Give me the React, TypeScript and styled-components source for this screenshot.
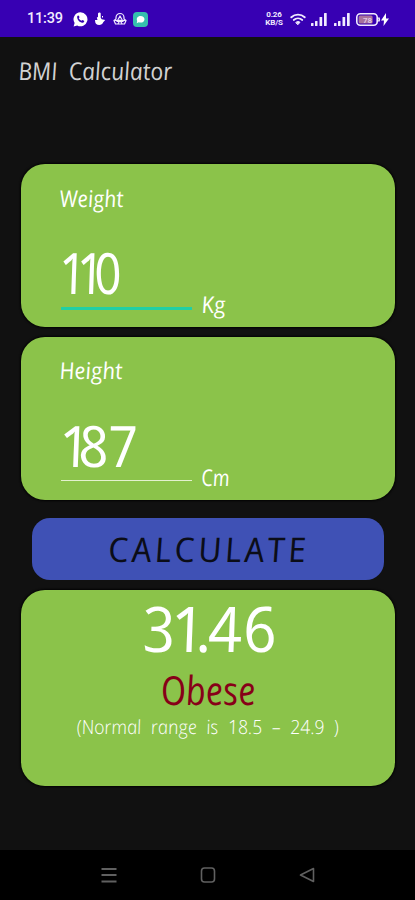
import React from "react";
import styled, { createGlobalStyle } from "styled-components";

const GlobalStyle = createGlobalStyle`
  * { box-sizing: border-box; }
  body { margin: 0; background: #111; }
`;

const Screen = styled.div`
  width: 415px;
  height: 900px;
  display: flex;
  flex-direction: column;
  background: #111111;
  overflow: hidden;
  font-family: "Open Sans", "Noto Sans", sans-serif;
`;

const StatusBar = styled.header`
  height: 37px;
  flex: none;
  display: flex;
  align-items: center;
  justify-content: space-between;
  padding: 1px 25px 0 27px;
  background: #3700b3;
  color: #f1ebff;
`;

const StatusGroup = styled.div<{ $gap: number }>`
  display: flex;
  align-items: center;
  gap: ${(p) => p.$gap}px;
`;

const Clock = styled.span`
  width: 36px;
  margin-right: 3px;
  font: 500 14.5px/18px Roboto, sans-serif;
  letter-spacing: -0.2px;
`;

const NetSpeed = styled.div`
  display: flex;
  flex-direction: column;
  width: 20px;
  text-align: center;
  font: 700 8px/8px Roboto, sans-serif;
  letter-spacing: -0.1px;
`;

const NetLine = styled.span`
  display: block;
  height: 8px;
  overflow: hidden;
`;

const Ink = styled.span<{
  $size: number;
  $line: number;
  $stretch?: number;
  $skew?: number;
  $weight?: number;
  $track?: number;
  $words?: number;
  $color?: string;
  $center?: boolean;
}>`
  display: block;
  white-space: pre;
  font-style: italic;
  font-weight: ${(p) => p.$weight ?? 400};
  font-size: ${(p) => p.$size}px;
  line-height: ${(p) => p.$line}px;
  letter-spacing: ${(p) => p.$track ?? 0}px;
  word-spacing: ${(p) => p.$words ?? 0}px;
  color: ${(p) => p.$color ?? "#fff"};
  transform: scaleX(${(p) => p.$stretch ?? 1}) skewX(${(p) => p.$skew ?? 8}deg);
  transform-origin: ${(p) => (p.$center ? "center" : "left center")};
`;

const Glyph = styled.span<{ $kern: number }>`
  letter-spacing: ${(p) => p.$kern}px;
`;

const TitleBar = styled.div`
  height: 127px;
  flex: none;
  padding: 18px 0 0 18px;
`;

const Content = styled.main`
  flex: 1;
  display: flex;
  flex-direction: column;
  padding: 0 20.5px 0 21px;
`;

const Card = styled.section<{ $h: number }>`
  height: ${(p) => p.$h}px;
  flex: none;
  border-radius: 24px;
  background: #8bc34a;
  box-shadow: 0 0 2px 1px #030303;
`;

const MeasureCard = styled(Card)`
  padding: 17.5px 0 0 38px;
  margin-bottom: 9.5px;
`;

const EntryRow = styled.div`
  display: flex;
  height: 90px;
  margin-top: 18.5px;
`;

const Field = styled.div<{ $active?: boolean }>`
  width: 131px;
  height: ${(p) => (p.$active ? 77.5 : 76.5)}px;
  margin: 0 8px 0 2px;
  padding-top: 5px;
  border-bottom: ${(p) => (p.$active ? "3px solid #20cfa5" : "1.5px solid #e3f1ce")};
`;

const FieldValue = styled.div`
  margin-left: -3px;
`;

const Unit = styled.div`
  padding: 56px 0 0 1px;
`;

const CalculateButton = styled.button`
  width: 352px;
  height: 62px;
  margin: 9px 0 9.5px 11px;
  padding: 0;
  border: 0;
  border-radius: 18px;
  background: #3f51b5;
  font-family: inherit;
  flex: none;
`;

const ResultCard = styled(Card)`
  padding-top: 3px;
  display: flex;
  flex-direction: column;
  align-items: center;
`;

const NavBar = styled.nav`
  height: 50px;
  flex: none;
  display: flex;
  align-items: center;
  justify-content: center;
  gap: 81px;
  background: #000;
`;

const Signal = () => (
  <svg width="17" height="13" viewBox="0 0 17 13" fill="currentColor">
    <rect x="0" y="10" width="2.5" height="3" rx=".5" />
    <rect x="4" y="8" width="2.5" height="5" rx=".5" />
    <rect x="8.5" y="4" width="2.7" height="9" rx=".5" />
    <rect x="13" y="0" width="2.7" height="13" rx=".5" />
  </svg>
);

const CallIcon = () => (
  <svg width="15" height="15" viewBox="0 0 15 15">
    <path d="M7.5 .3a7 7 0 1 1-3.3 13.2L.6 14.5l1-3.5A7 7 0 0 1 7.5.3Z" fill="#fff" />
    <path d="M4.3 4.1c.6-1 1.4-.8 1.7 0l.5 1.2-.7.9c.6 1.2 1.4 2 2.7 2.6l.9-.9 1.6.8c.7.5-.2 2-1.400 2.100C6.800 11 3.400 7.300 4.300 4.100Z" fill="#3700b3" />
  </svg>
);

const TapIcon = () => (
  <svg width="12" height="14" viewBox="0 0 12 14" fill="#fff">
    <path d="M4 1.500c.5-1.300 2.500-1.300 2.700 0v4.300l1 1.500 3.500.7-2 2.300c-.7 1.700-2 2.700-4 2.700-2.500 0-4-1.500-4-3.300L1 8h2.500l-.7-2.500L4 5Z" />
    <path d="M8.500 4v1.500" stroke="#fff" strokeWidth="1" />
  </svg>
);

const DriveIcon = () => (
  <svg width="14" height="14" viewBox="0 0 14 14" fill="none" stroke="currentColor" strokeWidth="1.200" strokeLinejoin="round">
    <path d="M3 7V5.500a4 4 0 0 1 8 0V7l2 1.500-1.500 3.500h-9L1 8.500Z" />
    <path d="M4 9.500 7 4l3 5.500ZM1.500 8.500h11M5 12l2-4 2 4" />
  </svg>
);

const ChatIcon = () => (
  <svg width="15" height="15" viewBox="0 0 15 15">
    <rect width="15" height="15" rx="4" fill="#35bfae" />
    <path d="M7.500 4c2.500 0 4 1.300 4 3.200s-1.600 3.400-4 3.400c-.7 0-1.300-.1-1.800-.4l-2 1.100.5-2.200C3 6.400 4.600 4 7.500 4Z" fill="#fff" />
  </svg>
);

const WifiIcon = () => (
  <svg width="16" height="13" viewBox="0 0 16 13" fill="none" stroke="currentColor" strokeLinecap="round">
    <path d="M1.300 4.300C5 .7 11 .7 14.700 4.300" strokeWidth="1.900" />
    <path d="M3.700 7c2.500-2.300 6.100-2.300 8.600 0" strokeWidth="1.700" />
    <path d="M6 9.300c1.200-1 2.800-1 4 0L8 11.500Z" fill="currentColor" strokeWidth="1" />
  </svg>
);

const BatteryIcon = () => (
  <svg width="34" height="13" viewBox="0 0 34 13">
    <rect x=".8" y=".8" width="20.400" height="11.400" rx="3.500" fill="none" stroke="currentColor" strokeWidth="1.600" />
    <rect x="2.600" y="2.600" width="14" height="7.800" rx="1.500" fill="#a8719c" />
    <path d="M22.500 4.500q1.700 2 0 4" stroke="currentColor" fill="none" strokeWidth="1.500" />
    <text x="11.500" y="9.500" textAnchor="middle" fontFamily="Roboto" fontSize="8" fontWeight="700" fill="#dfc6e4">78</text>
    <path d="M30 0 25 7.500h3L27.500 13 33 5.500h-3Z" fill="#fff" />
  </svg>
);

interface MeasureProps {
  label: string;
  value: React.ReactNode;
  unit: string;
  active?: boolean;
  labelStretch: number;
  valueStretch: number;
  unitStretch: number;
}

const Measure = (p: MeasureProps) => (
  <MeasureCard $h={163}>
    <Ink $size={23} $line={32} $weight={500} $stretch={p.labelStretch}>{p.label}</Ink>
    <EntryRow>
      <Field $active={p.active}>
        <FieldValue>
          <Ink $size={57} $line={70} $weight={500} $stretch={p.valueStretch} $skew={10}>{p.value}</Ink>
        </FieldValue>
      </Field>
      <Unit>
        <Ink $size={23} $line={32} $weight={500} $stretch={p.unitStretch}>{p.unit}</Ink>
      </Unit>
    </EntryRow>
  </MeasureCard>
);

export default function App() {
  return (
    <Screen>
      <GlobalStyle />
      <StatusBar>
        <StatusGroup $gap={6.5}>
          <Clock>11:39</Clock>
          <CallIcon />
          <TapIcon />
          <DriveIcon />
          <ChatIcon />
        </StatusGroup>
        <StatusGroup $gap={5.5}>
          <NetSpeed><NetLine>0.26</NetLine><NetLine>KB/S</NetLine></NetSpeed>
          <WifiIcon />
          <Signal />
          <Signal />
          <BatteryIcon />
        </StatusGroup>
      </StatusBar>
      <TitleBar>
        <Ink $size={24.5} $line={32} $color="#d2d2d2" $stretch={0.93} $words={6}>BMI Calculator</Ink>
      </TitleBar>
      <Content>
        <Measure label="Weight" value={<><Glyph $kern={-11}>11</Glyph>0</>} unit="Kg" active labelStretch={0.92} valueStretch={0.86} unitStretch={0.97} />
        <Measure label="Height" value={<><Glyph $kern={-12.5}>1</Glyph>87</>} unit="Cm" labelStretch={0.96} valueStretch={0.98} unitStretch={0.84} />
        <CalculateButton>
          <Ink $size={34} $line={63} $color="#0b0d18" $track={3.2} $center $stretch={1.02}>CALCULATE</Ink>
        </CalculateButton>
        <ResultCard $h={196.5}>
          <Ink $size={63} $line={70} $weight={500} $skew={10} $stretch={0.98} $center><Glyph $kern={-5}>3</Glyph><Glyph $kern={-9}>1</Glyph><Glyph $kern={-4}>.</Glyph><Glyph $kern={1}>4</Glyph>6</Ink>
          <Ink $size={40} $line={54} $color="#870018" $stretch={0.87} $center>Obese</Ink>
          <Ink $size={19.5} $line={19} $weight={300} $stretch={0.94} $skew={10} $center>(Normal  range  is  18.5  –  24.9  )</Ink>
        </ResultCard>
      </Content>
      <NavBar>
        <svg width="18" height="18" viewBox="0 0 18 18" fill="none" stroke="#606060" strokeWidth="1.800"><path d="M1.500 3h15M1.500 9h15M1.500 15.500h15" /></svg>
        <svg width="18" height="18" viewBox="0 0 18 18" fill="none" stroke="#606060" strokeWidth="1.600"><rect x="2.500" y="2" width="13" height="14" rx="3" /></svg>
        <svg width="18" height="18" viewBox="0 0 18 18" fill="none" stroke="#606060" strokeWidth="1.600" strokeLinejoin="round"><path d="M15.500 2.500v13L2.500 9Z" /></svg>
      </NavBar>
    </Screen>
  );
}
